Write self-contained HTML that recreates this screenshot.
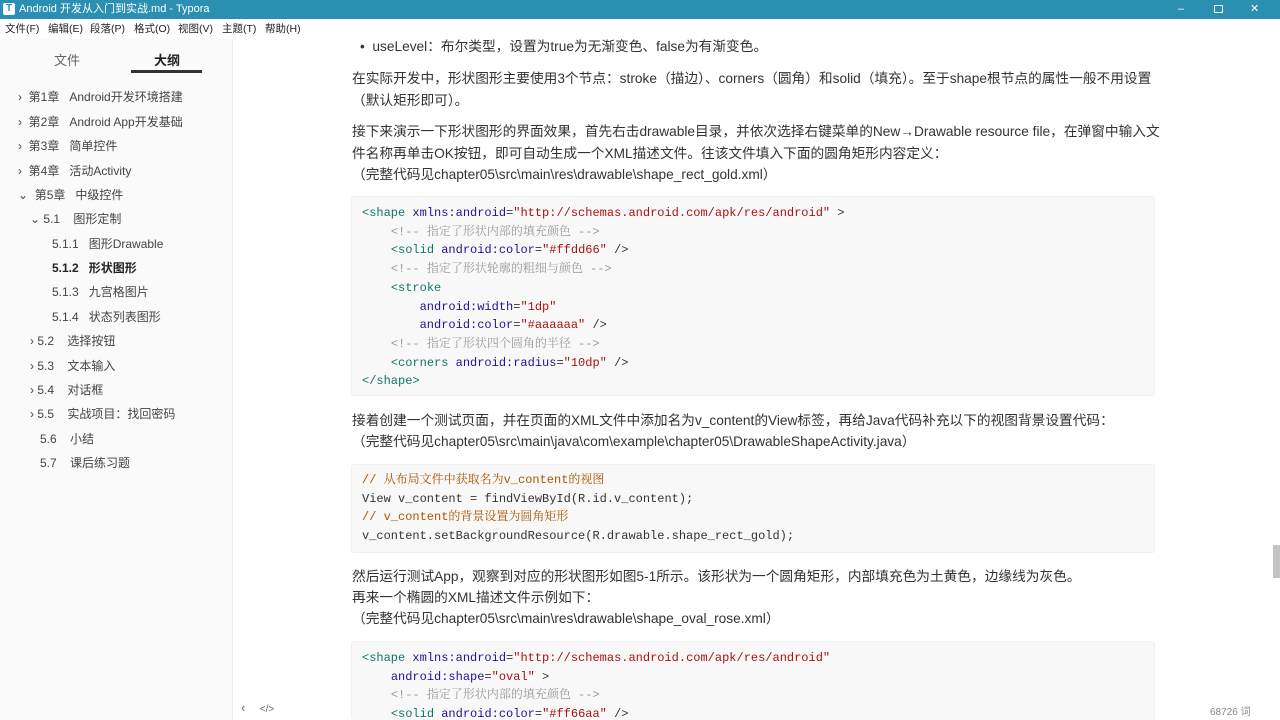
<!DOCTYPE html>
<html><head><meta charset="utf-8"><style>
*{margin:0;padding:0;box-sizing:border-box}
html,body{width:1280px;height:720px;overflow:hidden}
body{background:#fff;font-family:"Liberation Sans","Noto Sans CJK SC",sans-serif;color:#333;position:relative}
.a{position:absolute;white-space:nowrap}
#title{top:0;left:0;width:1280px;height:19px;background:#2b8fb1;color:#fff;font-size:11px;line-height:19px}
#menu{top:19px;left:0;width:1280px;height:20px;background:#fff;font-size:10.5px;line-height:20px;color:#222}
#menu span{position:absolute}
#side{top:39px;left:0;width:233px;height:681px;background:#fafafa;border-right:1px solid #eee}
.t{font-size:12px;color:#444}
.p{font-size:13.7px;color:#333;left:352px;margin-top:-2px}
.code{position:absolute;left:351px;width:804px;background:#f8f8f8;border:1px solid #f0f0f0;border-radius:3px}
.c{position:absolute;left:362px;font-family:"Liberation Mono","Noto Sans CJK SC",monospace;font-size:12px;white-space:pre;color:#333}
.tg{color:#117766}.at{color:#221199}.s{color:#aa1111}.cm{color:#999}.jc{color:#aa5500}
.cm,.jc{font-family:"Liberation Mono","Noto Serif CJK SC",monospace}
</style></head><body>
<div id="title" class="a"><span style="position:absolute;left:3px;top:3px;width:12px;height:12px;background:#fff;color:#2b8fb1;font-size:10px;line-height:12px;text-align:center;font-weight:bold;border-radius:2px">T</span><span style="position:absolute;left:19px">Android 开发从入门到实战.md - Typora</span>
<span style="position:absolute;left:1178px;top:0">–</span><span style="position:absolute;left:1214px;top:5px;width:9px;height:8px;border:1px solid #fff"></span><span style="position:absolute;left:1250px">✕</span></div>
<div id="menu" class="a"><span style="left:5px">文件(F)</span><span style="left:48px">编辑(E)</span><span style="left:90px">段落(P)</span><span style="left:134px">格式(O)</span><span style="left:178px">视图(V)</span><span style="left:222px">主题(T)</span><span style="left:265px">帮助(H)</span></div>
<div id="side" class="a"></div>
<div class="a" style="left:54px;top:50px;font-size:13px;color:#666">文件</div>
<div class="a" style="left:154px;top:50px;font-size:13px;color:#222;font-weight:bold">大纲</div>
<div class="a" style="left:131px;top:70px;width:71px;height:3px;background:#333"></div>
<div class="a t" style="left:18px;top:88px">›&nbsp;&nbsp;第1章&nbsp;&nbsp;&nbsp;Android开发环境搭建</div>
<div class="a t" style="left:18px;top:113px">›&nbsp;&nbsp;第2章&nbsp;&nbsp;&nbsp;Android App开发基础</div>
<div class="a t" style="left:18px;top:137px">›&nbsp;&nbsp;第3章&nbsp;&nbsp;&nbsp;简单控件</div>
<div class="a t" style="left:18px;top:162px">›&nbsp;&nbsp;第4章&nbsp;&nbsp;&nbsp;活动Activity</div>
<div class="a t" style="left:18px;top:186px">⌄&nbsp;&nbsp;第5章&nbsp;&nbsp;&nbsp;中级控件</div>
<div class="a t" style="left:30px;top:210px">⌄&nbsp;5.1&nbsp;&nbsp;&nbsp;&nbsp;图形定制</div>
<div class="a t" style="left:52px;top:235px">5.1.1&nbsp;&nbsp;&nbsp;图形Drawable</div>
<div class="a t" style="left:52px;top:259px;font-weight:bold;color:#222">5.1.2&nbsp;&nbsp;&nbsp;形状图形</div>
<div class="a t" style="left:52px;top:283px">5.1.3&nbsp;&nbsp;&nbsp;九宫格图片</div>
<div class="a t" style="left:52px;top:308px">5.1.4&nbsp;&nbsp;&nbsp;状态列表图形</div>
<div class="a t" style="left:30px;top:332px">›&nbsp;5.2&nbsp;&nbsp;&nbsp;&nbsp;选择按钮</div>
<div class="a t" style="left:30px;top:357px">›&nbsp;5.3&nbsp;&nbsp;&nbsp;&nbsp;文本输入</div>
<div class="a t" style="left:30px;top:381px">›&nbsp;5.4&nbsp;&nbsp;&nbsp;&nbsp;对话框</div>
<div class="a t" style="left:30px;top:405px">›&nbsp;5.5&nbsp;&nbsp;&nbsp;&nbsp;实战项目：找回密码</div>
<div class="a t" style="left:40px;top:430px">5.6&nbsp;&nbsp;&nbsp;&nbsp;小结</div>
<div class="a t" style="left:40px;top:454px">5.7&nbsp;&nbsp;&nbsp;&nbsp;课后练习题</div>
<div class="a" style="left:241px;top:700px;font-size:13px;color:#666">‹&nbsp;&nbsp;&nbsp;&nbsp;<span style="font-size:10px">&lt;/&gt;</span></div>
<div class="a" style="left:1210px;top:703px;font-size:10px;color:#888">68726 词</div>
<div class="a" style="left:1273px;top:545px;width:7px;height:33px;background:#c4c4c4"></div>

<div class="a p" style="left:360px;top:37px">•&nbsp;&nbsp;useLevel：布尔类型，设置为true为无渐变色、false为有渐变色。</div>
<div class="a p" style="top:69px">在实际开发中，形状图形主要使用3个节点：stroke（描边）、corners（圆角）和solid（填充）。至于shape根节点的属性一般不用设置</div>
<div class="a p" style="top:91px">（默认矩形即可）。</div>
<div class="a p" style="top:122px">接下来演示一下形状图形的界面效果，首先右击drawable目录，并依次选择右键菜单的New→Drawable resource file，在弹窗中输入文</div>
<div class="a p" style="top:144px">件名称再单击OK按钮，即可自动生成一个XML描述文件。往该文件填入下面的圆角矩形内容定义：</div>
<div class="a p" style="top:165px">（完整代码见chapter05\src\main\res\drawable\shape_rect_gold.xml）</div>
<div class="code" style="top:196px;height:200px"></div>
<div class="c" style="top:204px;line-height:18.7px"><span class="tg">&lt;shape</span> <span class="at">xmlns:android</span>=<span class="s">"http://schemas.android.com/apk/res/android"</span> &gt;
    <span class="cm">&lt;!-- 指定了形状内部的填充颜色 --&gt;</span>
    <span class="tg">&lt;solid</span> <span class="at">android:color</span>=<span class="s">"#ffdd66"</span> /&gt;
    <span class="cm">&lt;!-- 指定了形状轮廓的粗细与颜色 --&gt;</span>
    <span class="tg">&lt;stroke</span>
        <span class="at">android:width</span>=<span class="s">"1dp"</span>
        <span class="at">android:color</span>=<span class="s">"#aaaaaa"</span> /&gt;
    <span class="cm">&lt;!-- 指定了形状四个圆角的半径 --&gt;</span>
    <span class="tg">&lt;corners</span> <span class="at">android:radius</span>=<span class="s">"10dp"</span> /&gt;
<span class="tg">&lt;/shape&gt;</span></div>
<div class="a p" style="top:411px">接着创建一个测试页面，并在页面的XML文件中添加名为v_content的View标签，再给Java代码补充以下的视图背景设置代码：</div>
<div class="a p" style="top:432px">（完整代码见chapter05\src\main\java\com\example\chapter05\DrawableShapeActivity.java）</div>
<div class="code" style="top:464px;height:89px"></div>
<div class="c" style="top:471px;line-height:18.7px"><span class="jc">// 从布局文件中获取名为v_content的视图</span>
View v_content = findViewById(R.id.v_content);
<span class="jc">// v_content的背景设置为圆角矩形</span>
v_content.setBackgroundResource(R.drawable.shape_rect_gold);</div>
<div class="a p" style="top:567px">然后运行测试App，观察到对应的形状图形如图5-1所示。该形状为一个圆角矩形，内部填充色为土黄色，边缘线为灰色。</div>
<div class="a p" style="top:588px">再来一个椭圆的XML描述文件示例如下：</div>
<div class="a p" style="top:609px">（完整代码见chapter05\src\main\res\drawable\shape_oval_rose.xml）</div>
<div class="code" style="top:641px;height:79px;border-bottom:none"></div>
<div class="c" style="top:649px;line-height:18.7px"><span class="tg">&lt;shape</span> <span class="at">xmlns:android</span>=<span class="s">"http://schemas.android.com/apk/res/android"</span>
    <span class="at">android:shape</span>=<span class="s">"oval"</span> &gt;
    <span class="cm">&lt;!-- 指定了形状内部的填充颜色 --&gt;</span>
    <span class="tg">&lt;solid</span> <span class="at">android:color</span>=<span class="s">"#ff66aa"</span> /&gt;</div>
</body></html>
